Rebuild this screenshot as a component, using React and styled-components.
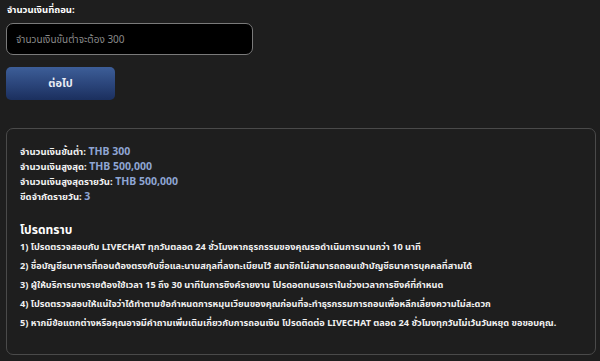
import React, { useState } from "react";
import styled, { createGlobalStyle } from "styled-components";

const GlobalStyle = createGlobalStyle`
  html, body {
    margin: 0;
    padding: 0;
    background: #1e1e1e;
  }
  body {
    font-family: "Noto Sans", "Noto Sans Thai", "Liberation Sans", sans-serif;
    color: #ffffff;
  }
`;

const Page = styled.div`
  width: 600px;
  height: 361px;
  box-sizing: border-box;
  padding: 3px 4px 0 6px;
  background: #1e1e1e;
  overflow: hidden;
`;

const Label = styled.div`
  font-size: 9.5px;
  font-weight: 700;
  line-height: 14px;
  margin-left: 1px;
`;

const Input = styled.input`
  display: block;
  box-sizing: border-box;
  width: 247px;
  height: 32px;
  margin-top: 6px;
  padding: 0 9px;
  background: #000;
  border: 1px solid #7a7a7a;
  border-radius: 7px;
  color: #fff;
  font-family: inherit;
  font-size: 10px;
  outline: none;

  &::placeholder {
    color: #8a8a8a;
  }
`;

const Button = styled.button`
  display: block;
  width: 109px;
  height: 33px;
  margin-top: 12px;
  border: none;
  border-radius: 5px;
  background: linear-gradient(180deg, #3d5e98 0%, #2a4479 55%, #1b2f5e 100%);
  color: #e8ecf4;
  font-family: inherit;
  font-size: 11px;
  font-weight: 700;
  cursor: pointer;
`;

const Panel = styled.div`
  box-sizing: border-box;
  margin-top: 28px;
  width: 590px;
  height: 227px;
  border: 1px solid #4a4a4a;
  border-radius: 7px;
  padding: 15px 13px 0 13px;
`;

const Limits = styled.div`
  display: flex;
  flex-direction: column;
`;

const LimitRow = styled.div`
  font-size: 9.5px;
  font-weight: 700;
  line-height: 15px;
  color: #f2f2f2;
`;

const Value = styled.span`
  color: #8ea5d3;
  font-size: 10.5px;
`;

const Heading = styled.div`
  margin-top: 18px;
  font-size: 12px;
  font-weight: 700;
  line-height: 16px;
`;

const Notes = styled.div`
  display: flex;
  flex-direction: column;
  gap: ${(p) => p.gap}px;
  margin-top: 2px;
`;

const Note = styled.p`
  margin: 0;
  font-size: 9.2px;
  font-weight: 700;
  line-height: 13px;
  color: #f0f0f0;
`;

const limits = [
  { label: "จำนวนเงินขั้นต่ำ:", value: "THB 300" },
  { label: "จำนวนเงินสูงสุด:", value: "THB 500,000" },
  { label: "จำนวนเงินสูงสุดรายวัน:", value: "THB 500,000" },
  { label: "ขีดจำกัดรายวัน:", value: "3" },
];

const notes = [
  "1) โปรดตรวจสอบกับ LIVECHAT ทุกวันตลอด 24 ชั่วโมงหากธุรกรรมของคุณรอดำเนินการนานกว่า 10 นาที",
  "2) ชื่อบัญชีธนาคารที่ถอนต้องตรงกับชื่อและนามสกุลที่ลงทะเบียนไว้ สมาชิกไม่สามารถถอนเข้าบัญชีธนาคารบุคคลที่สามได้",
  "3) ผู้ให้บริการบางรายต้องใช้เวลา 15 ถึง 30 นาทีในการซิงค์รายงาน โปรดอดทนรอเราในช่วงเวลาการซิงค์ที่กำหนด",
  "4) โปรดตรวจสอบให้แน่ใจว่าได้ทำตามข้อกำหนดการหมุนเวียนของคุณก่อนที่จะทำธุรกรรมการถอนเพื่อหลีกเลี่ยงความไม่สะดวก",
  "5) หากมีข้อแตกต่างหรือคุณอาจมีคำถามเพิ่มเติมเกี่ยวกับการถอนเงิน โปรดติดต่อ LIVECHAT ตลอด 24 ชั่วโมงทุกวันไม่เว้นวันหยุด ขอขอบคุณ.",
];

const App = () => {
  const [amount, setAmount] = useState("");

  return (
    <>
      <GlobalStyle />
      <Page>
        <Label>จำนวนเงินที่ถอน:</Label>
        <Input
          value={amount}
          onChange={(e) => setAmount(e.target.value)}
          placeholder="จำนวนเงินขั้นต่ำจะต้อง 300"
        />
        <Button>ต่อไป</Button>
        <Panel>
          <Limits>
            {limits.map((l) => (
              <LimitRow key={l.label}>
                {l.label} <Value>{l.value}</Value>
              </LimitRow>
            ))}
          </Limits>
          <Heading>โปรดทราบ</Heading>
          <Notes gap={6}>
            {notes.map((n) => (
              <Note key={n}>{n}</Note>
            ))}
          </Notes>
        </Panel>
      </Page>
    </>
  );
};

export default App;
